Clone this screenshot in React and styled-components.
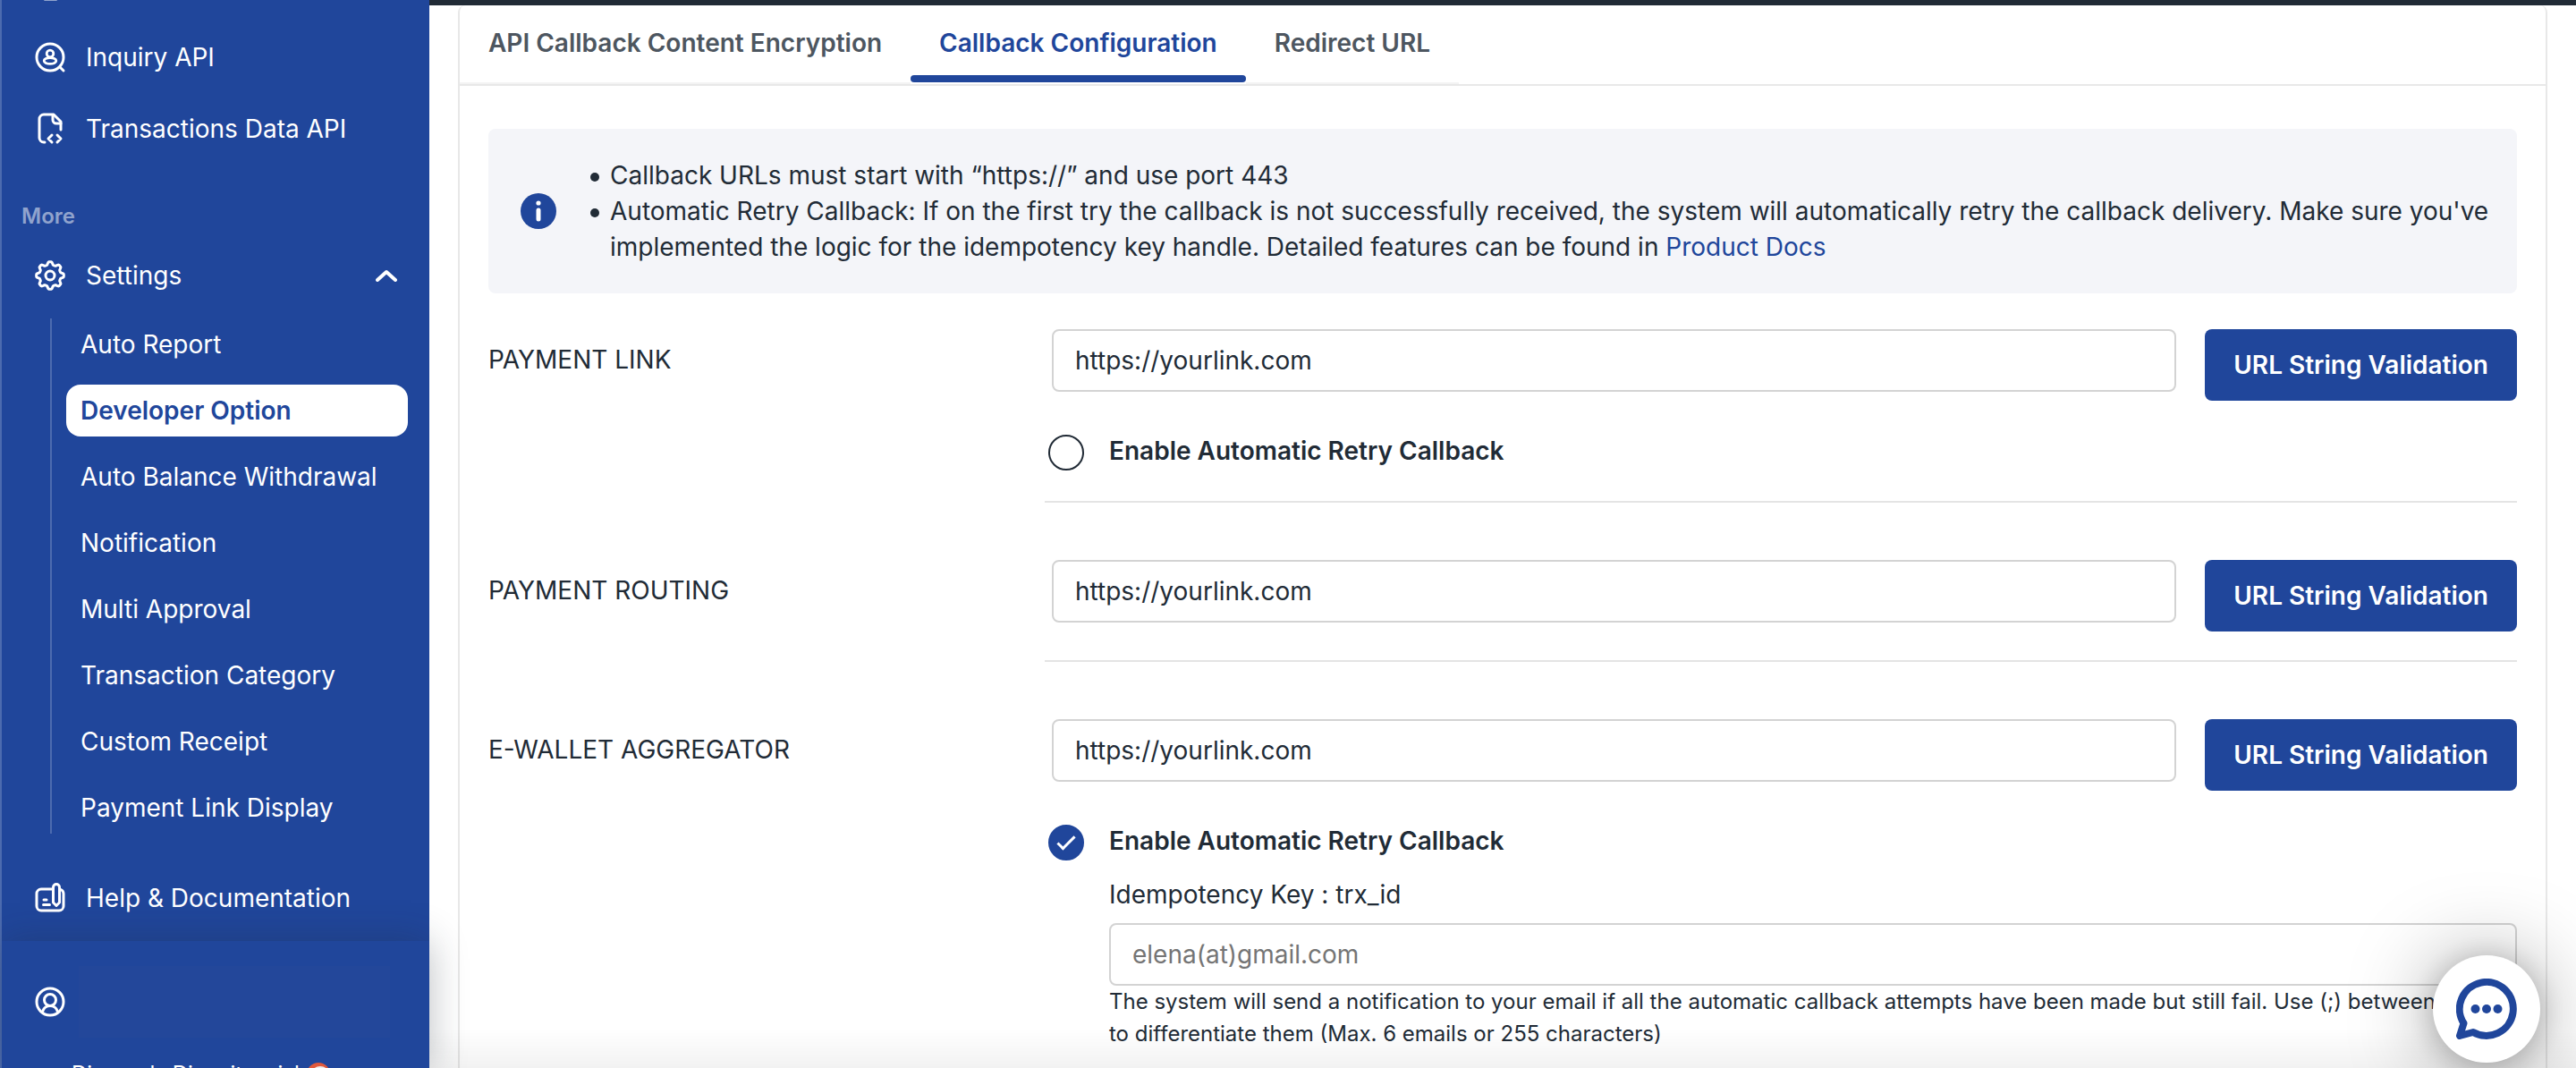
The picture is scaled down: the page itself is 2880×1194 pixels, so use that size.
import React, { useId, useState } from "react";
import styled, { createGlobalStyle } from "styled-components";

const blue = "#20469b";
const ink = "#212b36";

const GlobalStyle = createGlobalStyle`
  *, *::before, *::after { box-sizing: border-box; }
  body {
    margin: 0;
    background: #fff;
    color: ${ink};
    font-family: Inter, "Liberation Sans", sans-serif;
    font-size: 28px;
    line-height: 40px;
    overflow: hidden;
  }
  button, input { font: inherit; color: inherit; }
  ul { margin: 0; padding: 0; list-style: none; }
`;

const Shell = styled.div`
  display: flex;
  height: 100vh;
  overflow: hidden;
`;

/* ---------- sidebar ---------- */

const Sidebar = styled.aside`
  flex: 0 0 480px;
  display: flex;
  flex-direction: column;
  background: ${blue};
  border-left: 2px solid #4c6baf;
  color: #fff;
`;

const Nav = styled.nav`
  flex: 1;
  min-height: 0;
  overflow: hidden;
`;

const NavScroll = styled.div`
  display: flex;
  flex-direction: column;
  margin-top: -56px;
`;

const NavLink = styled.a`
  display: flex;
  align-items: center;
  gap: 22px;
  flex: 0 0 80px;
  padding: 0 36px;
  color: inherit;
  text-decoration: none;
`;

const NavToggle = styled.button`
  display: flex;
  align-items: center;
  gap: 22px;
  flex: 0 0 80px;
  padding: 0 36px;
  border: 0;
  background: none;
  text-align: left;
`;

const NavText = styled.span`
  flex: 1;
`;

const SectionLabel = styled.h2`
  margin: 0;
  padding: 43px 22px 11px;
  font-size: 24px;
  line-height: 30px;
  font-weight: 600;
  color: #90a3cd;
`;

const SubList = styled.ul`
  display: flex;
  flex-direction: column;
  gap: 16px;
  margin: 8px 24px 32px 54px;
  padding-left: 16px;
  border-left: 2px solid #4c6baf;
`;

const SubLink = styled.a`
  display: block;
  padding: 9px 16px;
  border-radius: 16px;
  color: ${(p) => (p.$active ? blue : "#fff")};
  background: ${(p) => (p.$active ? "#fff" : "transparent")};
  font-weight: ${(p) => (p.$active ? 600 : 400)};
  text-decoration: none;
`;

const Account = styled.footer`
  position: relative;
  flex: 0 0 142px;
  min-height: 0;
  padding: 28px 44px 0 36px;
  background: ${blue};
  box-shadow: 0 0 40px rgba(33, 43, 54, 0.3);
`;

const AccountInner = styled.div`
  height: 114px;
`;

const AccountRow = styled.div`
  display: flex;
  align-items: center;
  gap: 14px;
  height: 80px;
`;

const AccountName = styled.div`
  flex: 1;
  align-self: stretch;
  background: #23479a;
`;

const AccountNote = styled.div`
  display: flex;
  align-items: center;
  gap: 8px;
  margin-top: 26px;
  padding-left: 42px;
  font-size: 24px;
  line-height: 30px;
  white-space: nowrap;
`;

/* ---------- main ---------- */

const Main = styled.main`
  flex: 1;
  min-width: 0;
  display: flex;
  flex-direction: column;
`;

const TopBar = styled.div`
  flex: 0 0 6px;
  background: ${ink};
`;

const Card = styled.section`
  flex: 1;
  min-height: 0;
  margin: 0 32px;
  border: 2px solid #e8e8e8;
  border-width: 0 2px;
  border-radius: 8px 8px 0 0;
`;

const TabBar = styled.div`
  display: flex;
  border-bottom: 2px solid #e8e8e8;
`;

const Tab = styled.button`
  padding: 0;
  border: 0;
  border-bottom: 2px solid ${(p) => (p.$active ? "#fff" : "#f3f3f3")};
  background: none;
  color: ${(p) => (p.$active ? blue : "#4d5660")};
  font-weight: 600;

  &::after {
    content: "";
    display: block;
    height: 8px;
    border-radius: 4px;
    background: ${(p) => (p.$active ? blue : "transparent")};
  }
`;

const TabText = styled.span`
  display: block;
  padding: 22px 32px 16px;
`;

const Panel = styled.div`
  padding: 48px 32px 0;
`;

const Notice = styled.div`
  display: flex;
  align-items: center;
  gap: 38px;
  padding: 32px 28px 32px 36px;
  border-radius: 8px;
  background: #f4f5f9;

  svg { flex: none; }
`;

const NoticeList = styled.ul`
  li {
    display: flex;
    gap: 12px;
  }
  li::before {
    content: "";
    flex: none;
    width: 10px;
    height: 10px;
    margin-top: 17px;
    border-radius: 50%;
    background: ${ink};
  }
`;

const DocsLink = styled.a`
  color: ${blue};
  text-decoration: none;
`;

const Setting = styled.div`
  display: grid;
  grid-template-columns: 622px minmax(0, 1fr);
  padding-top: ${(p) => (p.$first ? 40 : 64)}px;
`;

const SettingName = styled.label`
  padding-top: 14px;
`;

const SettingBody = styled.div`
  padding-bottom: 32px;
  border-bottom: 2px solid #e4e4e4;
`;

const UrlRow = styled.div`
  display: flex;
  align-items: flex-start;
  gap: 32px;
  padding-left: 8px;
`;

const TextInput = styled.input`
  flex: 1;
  width: 100%;
  min-width: 0;
  height: 70px;
  padding: 0 24px;
  border: 2px solid #d3d3d3;
  border-radius: 8px;
  background: #fff;

  &::placeholder { color: #757575; opacity: 1; }
`;

const PrimaryButton = styled.button`
  flex: none;
  height: 80px;
  padding: 0 32px;
  border: 0;
  border-radius: 8px;
  background: ${blue};
  color: #fff;
  font-weight: 600;
`;

const RetryBlock = styled.div`
  display: flex;
  flex-direction: column;
  padding: 32px 0 0 4px;
`;

const RetryToggle = styled.label`
  display: flex;
  gap: 28px;
  line-height: 48px;
  font-weight: 600;
`;

const RoundCheck = styled.input`
  appearance: none;
  flex: none;
  display: grid;
  place-content: center;
  width: 40px;
  height: 40px;
  margin: 6px 0 0;
  border: 2px solid ${ink};
  border-radius: 50%;

  &:checked {
    border-color: ${blue};
    background: ${blue};
  }
  &:checked::after {
    content: "";
    width: 20px;
    height: 10px;
    margin-bottom: 4px;
    border: solid #fff;
    border-width: 0 0 3px 3px;
    transform: rotate(-45deg);
  }
`;

const RetryDetails = styled.div`
  display: flex;
  flex-direction: column;
  padding: 16px 0 0 68px;
`;

const KeyLabel = styled.label`
  margin-bottom: 12px;
`;

const EmailInput = styled(TextInput)`
  flex: none;
`;

const Hint = styled.p`
  margin: 0;
  font-size: 24px;
  line-height: 36px;
`;

const BottomFade = styled.div`
  position: fixed;
  inset: auto 0 0 480px;
  height: 44px;
  background: linear-gradient(rgba(0, 0, 0, 0), rgba(0, 0, 0, 0.05));
  pointer-events: none;
`;

const ChatButton = styled.button`
  position: fixed;
  right: 40px;
  bottom: 6px;
  display: grid;
  place-items: center;
  width: 120px;
  height: 120px;
  padding: 0;
  border: 0;
  border-radius: 50%;
  background: #fff;
  box-shadow: 0 4px 96px rgba(0, 0, 0, 0.4), 0 4px 32px rgba(0, 0, 0, 0.2);
`;

/* ---------- icons ---------- */

const Icon = ({ children, size = 36 }) => (
  <svg width={size} height={size} viewBox="0 0 36 36" fill="none" stroke="currentColor"
    strokeWidth="3" strokeLinecap="round" strokeLinejoin="round" aria-hidden="true">
    {children}
  </svg>
);

const DocIcon = () => (
  <Icon><rect x="11" y="3" width="15" height="30" rx="2" /></Icon>
);
const InquiryIcon = () => (
  <Icon>
    <circle cx="18" cy="18" r="15" />
    <path d="M29 29l4 4" />
    <circle cx="18" cy="14" r="3.8" strokeWidth="2.8" />
    <ellipse cx="18" cy="22" rx="6.8" ry="3.4" strokeWidth="2.8" />
  </Icon>
);
const FileCodeIcon = () => (
  <Icon>
    <path d="M12 33H11a5 5 0 0 1-5-5V7a5 5 0 0 1 5-5h11l8 8v9" />
    <path d="M21 3v5a4 4 0 0 0 4 4h5" />
    <path d="M20 25l-4 4 4 4M26 25l4 4-4 4" strokeWidth="3" />
  </Icon>
);
const gear = (() => {
  const pts = [];
  for (let i = 0; i <= 96; i++) {
    const a = (i / 96) * Math.PI * 2;
    const r = 13.7 + 1.7 * Math.tanh(2.2 * Math.cos(8 * a));
    pts.push(`${(18 + r * Math.sin(a)).toFixed(2)} ${(18 - r * Math.cos(a)).toFixed(2)}`);
  }
  return `M${pts.join("L")}Z`;
})();
const GearIcon = () => (
  <Icon>
    <path d={gear} />
    <circle cx="18" cy="18" r="5" />
  </Icon>
);
const HelpIcon = () => (
  <Icon>
    <path d="M20 8H8a5 5 0 0 0-5 5v14a5 5 0 0 0 5 5h20a5 5 0 0 0 5-5V13a5 5 0 0 0-3-4.500" />
    <path d="M21.500 6a3.500 3.500 0 0 1 7 0v17l-3.500 3.500-3.500-3.500z" />
    <path d="M11 20h3M10.500 25.500h7" />
  </Icon>
);
const UserIcon = () => (
  <Icon>
    <circle cx="18" cy="18" r="15" />
    <circle cx="18" cy="16" r="6.500" />
    <path d="M9.500 29c1.500-4.500 4.500-6.500 8.500-6.500s7 2 8.500 6.500" />
  </Icon>
);
const ChevronUp = () => (
  <svg width="24" height="14" viewBox="0 0 24 14" fill="none" stroke="currentColor"
    strokeWidth="4" strokeLinecap="round" strokeLinejoin="round" aria-hidden="true">
    <path d="M2 12L12 3l10 9" />
  </svg>
);
const InfoIcon = () => (
  <svg width="40" height="40" viewBox="0 0 40 40" aria-hidden="true">
    <circle cx="20" cy="20" r="20" fill={blue} />
    <circle cx="20" cy="11" r="2.600" fill="#fff" />
    <path d="M20 19v10" stroke="#fff" strokeWidth="5" strokeLinecap="round" />
  </svg>
);
const BadgeIcon = () => (
  <svg width="26" height="26" viewBox="0 0 26 26" aria-hidden="true">
    <circle cx="13" cy="13" r="13" fill="#e0593c" />
    <circle cx="15" cy="15" r="11" fill="#eee" />
  </svg>
);
const ChatIcon = () => (
  <svg width="68" height="68" viewBox="0 0 68 68" aria-hidden="true">
    <path d="M8.500 50A30 30 0 1 1 19 60L4 64z" fill="none" stroke={blue} strokeWidth="8" strokeLinejoin="round" />
    <circle cx="21.500" cy="34" r="5" fill={blue} />
    <circle cx="34" cy="34" r="5" fill={blue} />
    <circle cx="46.500" cy="34" r="5" fill={blue} />
  </svg>
);

/* ---------- page ---------- */

const subItems = [
  "Auto Report",
  "Developer Option",
  "Auto Balance Withdrawal",
  "Notification",
  "Multi Approval",
  "Transaction Category",
  "Custom Receipt",
  "Payment Link Display",
];

const tabs = ["API Callback Content Encryption", "Callback Configuration", "Redirect URL"];

function CallbackSetting({ name, first, retry, enabled = false }) {
  const id = useId();
  const [on, setOn] = useState(enabled);
  return (
    <Setting $first={first}>
      <SettingName htmlFor={`${id}-url`}>{name}</SettingName>
      <SettingBody>
        <UrlRow>
          <TextInput id={`${id}-url`} type="text" defaultValue="https://yourlink.com" />
          <PrimaryButton type="button">URL String Validation</PrimaryButton>
        </UrlRow>
        {retry && (
          <RetryBlock>
            <RetryToggle>
              <RoundCheck type="checkbox" checked={on} onChange={(e) => setOn(e.target.checked)} />
              Enable Automatic Retry Callback
            </RetryToggle>
            {on && (
              <RetryDetails>
                <KeyLabel htmlFor={`${id}-mail`}>Idempotency Key : trx_id</KeyLabel>
                <EmailInput id={`${id}-mail`} type="text" placeholder="elena(at)gmail.com" />
                <Hint>
                  The system will send a notification to your email if all the automatic callback
                  attempts have been made but still fail. Use (;) between emails to differentiate
                  them (Max. 6 emails or 255 characters)
                </Hint>
              </RetryDetails>
            )}
          </RetryBlock>
        )}
      </SettingBody>
    </Setting>
  );
}

export default function App() {
  const [tab, setTab] = useState(1);
  return (
    <>
      <GlobalStyle />
      <Shell>
        <Sidebar>
          <Nav>
            <NavScroll>
              <NavLink href="#"><DocIcon /></NavLink>
              <NavLink href="#"><InquiryIcon /><NavText>Inquiry API</NavText></NavLink>
              <NavLink href="#"><FileCodeIcon /><NavText>Transactions Data API</NavText></NavLink>
              <SectionLabel>More</SectionLabel>
              <NavToggle type="button" aria-expanded="true">
                <GearIcon /><NavText>Settings</NavText><ChevronUp />
              </NavToggle>
              <SubList>
                {subItems.map((item) => (
                  <li key={item}>
                    <SubLink href="#" $active={item === "Developer Option"}>{item}</SubLink>
                  </li>
                ))}
              </SubList>
              <NavLink href="#"><HelpIcon /><NavText>Help &amp; Documentation</NavText></NavLink>
            </NavScroll>
          </Nav>
          <Account>
            <AccountInner>
              <AccountRow><UserIcon /><AccountName /></AccountRow>
              <AccountNote>Disperols Dispuitsevisl <BadgeIcon /></AccountNote>
            </AccountInner>
          </Account>
        </Sidebar>
        <Main>
          <TopBar />
          <Card>
            <TabBar role="tablist">
              {tabs.map((label, i) => (
                <Tab key={label} type="button" role="tab" aria-selected={i === tab}
                  $active={i === tab} onClick={() => setTab(i)}>
                  <TabText>{label}</TabText>
                </Tab>
              ))}
            </TabBar>
            <Panel>
              <Notice>
                <InfoIcon />
                <NoticeList>
                  <li><span>Callback URLs must start with “https://” and use port 443</span></li>
                  <li>
                    <span>
                      Automatic Retry Callback: If on the first try the callback is not successfully
                      received, the system will automatically retry the callback delivery. Make sure
                      you've implemented the logic for the idempotency key handle. Detailed features
                      can be found in <DocsLink href="#">Product Docs</DocsLink>
                    </span>
                  </li>
                </NoticeList>
              </Notice>
              <CallbackSetting name="PAYMENT LINK" first retry />
              <CallbackSetting name="PAYMENT ROUTING" />
              <CallbackSetting name="E-WALLET AGGREGATOR" retry enabled />
            </Panel>
          </Card>
        </Main>
      </Shell>
      <BottomFade />
      <ChatButton type="button" aria-label="Open chat"><ChatIcon /></ChatButton>
    </>
  );
}
